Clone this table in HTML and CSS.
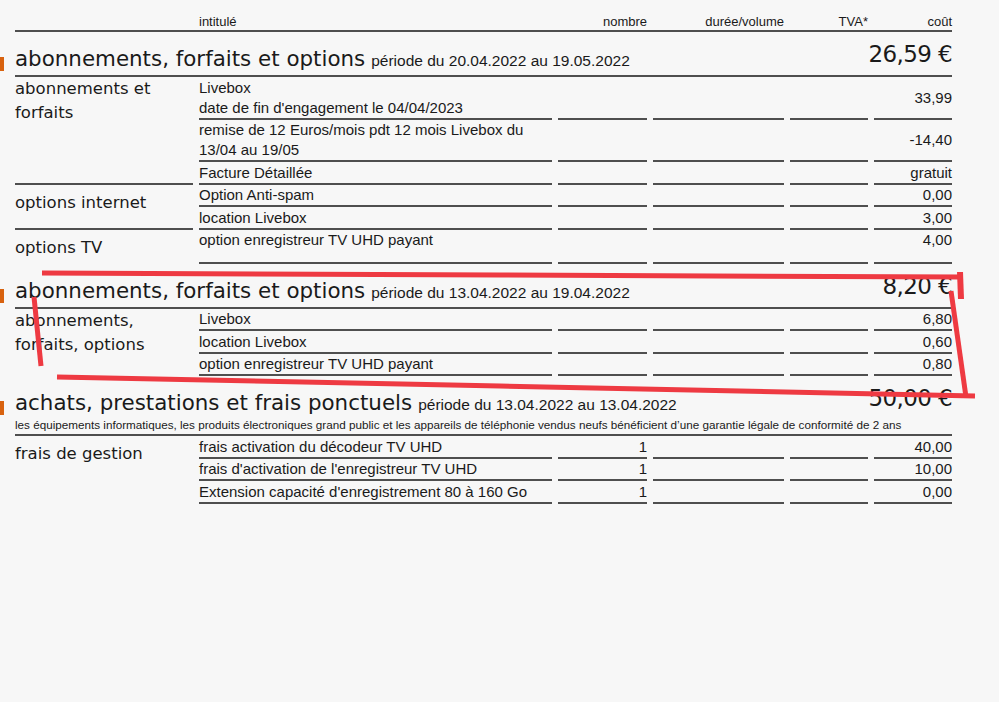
FILE: index.html
```html
<!DOCTYPE html>
<html lang="fr">
<head>
<meta charset="utf-8">
<title>Facture</title>
<link rel="stylesheet" href="styles.css">
</head>
<body>
<div class="page">
  <div class="thead">
    <span></span>
    <span class="h-int">intitulé</span>
    <span class="h-r">nombre</span>
    <span class="h-r">durée/volume</span>
    <span class="h-r">TVA*</span>
    <span class="h-r">coût</span>
  </div>

  <section class="sec">
    <div class="sec-head">
      <span class="marker"></span>
      <div class="sec-head-main">
        <div class="sec-title-row">
          <h2 class="sec-title">abonnements, forfaits et options</h2>
          <span class="period">période du 20.04.2022 au 19.05.2022</span>
          <span class="sec-amount"><span class="amt">26,59 €</span></span>
        </div>
      </div>
    </div>
    <div class="group">
      <div class="g-label">abonnements et forfaits</div>
      <div class="g-rows">
        <div class="row"><div class="c">Livebox<br>date de fin d'engagement le 04/04/2023</div><div class="c"></div><div class="c"></div><div class="c"></div><div class="c c-cost">33,99</div></div>
        <div class="row"><div class="c">remise de 12 Euros/mois pdt 12 mois Livebox du<br>13/04 au 19/05</div><div class="c"></div><div class="c"></div><div class="c"></div><div class="c c-cost">-14,40</div></div>
        <div class="row"><div class="c">Facture Détaillée</div><div class="c"></div><div class="c"></div><div class="c"></div><div class="c c-cost">gratuit</div></div>
      </div>
    </div>
    <div class="group">
      <div class="g-label g-pad">options internet</div>
      <div class="g-rows">
        <div class="row"><div class="c">Option Anti-spam</div><div class="c"></div><div class="c"></div><div class="c"></div><div class="c c-cost">0,00</div></div>
        <div class="row"><div class="c">location Livebox</div><div class="c"></div><div class="c"></div><div class="c"></div><div class="c c-cost">3,00</div></div>
      </div>
    </div>
    <div class="group">
      <div class="g-label g-pad g-last">options TV</div>
      <div class="g-rows">
        <div class="row row-tall"><div class="c">option enregistreur TV UHD payant</div><div class="c"></div><div class="c"></div><div class="c"></div><div class="c c-cost c-top">4,00</div></div>
      </div>
    </div>
  </section>

  <section class="sec">
    <div class="sec-head">
      <span class="marker"></span>
      <div class="sec-head-main">
        <div class="sec-title-row">
          <h2 class="sec-title">abonnements, forfaits et options</h2>
          <span class="period">période du 13.04.2022 au 19.04.2022</span>
          <span class="sec-amount"><span class="amt">8,20 €</span></span>
        </div>
      </div>
    </div>
    <div class="group">
      <div class="g-label g-last">abonnements, forfaits, options</div>
      <div class="g-rows">
        <div class="row"><div class="c">Livebox</div><div class="c"></div><div class="c"></div><div class="c"></div><div class="c c-cost">6,80</div></div>
        <div class="row"><div class="c">location Livebox</div><div class="c"></div><div class="c"></div><div class="c"></div><div class="c c-cost">0,60</div></div>
        <div class="row"><div class="c">option enregistreur TV UHD payant</div><div class="c"></div><div class="c"></div><div class="c"></div><div class="c c-cost">0,80</div></div>
      </div>
    </div>
  </section>

  <section class="sec">
    <div class="sec-head">
      <span class="marker"></span>
      <div class="sec-head-main">
        <div class="sec-title-row">
          <h2 class="sec-title">achats, prestations et frais ponctuels</h2>
          <span class="period">période du 13.04.2022 au 13.04.2022</span>
          <span class="sec-amount"><span class="amt">50,00 €</span></span>
        </div>
        <p class="disclaimer">les équipements informatiques, les produits électroniques grand public et les appareils de téléphonie vendus neufs bénéficient d’une garantie légale de conformité de 2 ans</p>
      </div>
    </div>
    <div class="group">
      <div class="g-label g-pad g-last">frais de gestion</div>
      <div class="g-rows">
        <div class="row"><div class="c">frais activation du décodeur TV UHD</div><div class="c c-num">1</div><div class="c"></div><div class="c"></div><div class="c c-cost">40,00</div></div>
        <div class="row"><div class="c">frais d'activation de l'enregistreur TV UHD</div><div class="c c-num">1</div><div class="c"></div><div class="c"></div><div class="c c-cost">10,00</div></div>
        <div class="row"><div class="c">Extension capacité d'enregistrement 80 à 160 Go</div><div class="c c-num">1</div><div class="c"></div><div class="c"></div><div class="c c-cost">0,00</div></div>
      </div>
    </div>
  </section>

  <svg class="scribble" width="999" height="702" viewBox="0 0 999 702" aria-hidden="true">
    <g fill="none" stroke="#ee3a42" stroke-linecap="butt" stroke-linejoin="round">
      <path d="M42 273 L500 275 L963 277" stroke-width="5"/>
      <path d="M960 272 L961 299" stroke-width="6"/>
      <path d="M951 291 L966 397" stroke-width="5"/>
      <path d="M57 377 L500 386 L975 396" stroke-width="5"/>
      <path d="M34 297 L41 366" stroke-width="5"/>
    </g>
  </svg>
</div>
</body>
</html>
```

FILE: styles.css
```css
html, body {
  margin: 0;
  padding: 0;
}

body {
  background: #f7f7f7;
  color: #1a1a1a;
  font-family: "Liberation Sans", Arial, sans-serif;
}

.page {
  position: relative;
  width: 999px;
  height: 702px;
  padding-left: 15px;
  box-sizing: border-box;
  overflow: hidden;
}

.thead {
  display: grid;
  grid-template-columns: 178px 353px 89px 131px 78px 78px;
  column-gap: 6px;
  width: 937px;
  padding-top: 14px;
  padding-bottom: 1px;
  font-size: 13px;
  line-height: 15px;
  border-bottom: 2px solid #4f4f4f;
}

.h-r {
  text-align: right;
}

.sec-head {
  display: flex;
  align-items: flex-start;
  margin-left: -15px;
  width: 952px;
}

.marker {
  flex: 0 0 4px;
  height: 14px;
  margin-top: 25px;
  margin-right: 11px;
  background: #d8620f;
}

.sec-head-main {
  flex: 1;
  padding-top: 14px;
  padding-bottom: 2px;
  border-bottom: 2px solid #4f4f4f;
}

.sec-title-row {
  display: flex;
  align-items: baseline;
  height: 27px;
}

.sec-title {
  margin: 0;
  font-family: "DejaVu Sans", sans-serif;
  font-weight: normal;
  font-size: 21.4px;
  line-height: 26px;
}

.period {
  margin-left: 6px;
  font-size: 15.5px;
  line-height: 18px;
}

.sec-amount {
  margin-left: auto;
  font-family: "DejaVu Sans", sans-serif;
  font-size: 23px;
  line-height: 12px;
  letter-spacing: -0.6px;
}

.amt {
  vertical-align: 4px;
}

.disclaimer {
  margin: 1px 0 0;
  font-size: 11.7px;
  line-height: 14px;
  white-space: nowrap;
}

.group {
  display: grid;
  grid-template-columns: 178px 753px;
  column-gap: 6px;
  width: 937px;
}

.g-label {
  font-family: "DejaVu Sans", sans-serif;
  font-size: 16.5px;
  line-height: 24px;
  border-bottom: 2px solid #4f4f4f;
}

.g-pad {
  padding-top: 6px;
}

.g-last {
  border-bottom: none;
}

.row {
  display: grid;
  grid-template-columns: 353px 89px 131px 78px 78px;
  column-gap: 6px;
}

.c {
  font-size: 15px;
  line-height: 20px;
  padding-top: 0.5px;
  border-bottom: 2px solid #4f4f4f;
}

.row-tall .c {
  padding-bottom: 11.5px;
}

.c-num {
  text-align: right;
}

.c-cost {
  display: flex;
  align-items: center;
  justify-content: flex-end;
}

.c-top {
  align-items: flex-start;
}

.scribble {
  position: absolute;
  left: 0;
  top: 0;
  pointer-events: none;
}
```
